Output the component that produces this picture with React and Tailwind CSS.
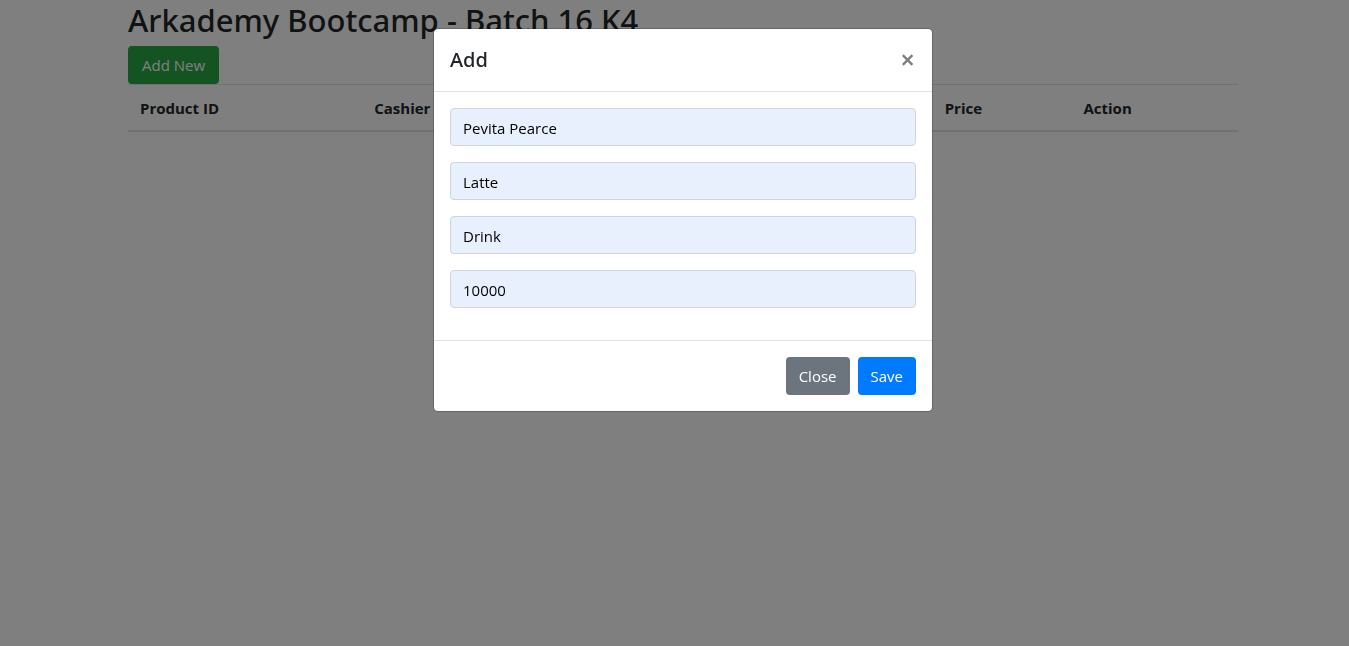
const columns = [
  { label: "Product ID", width: "w-[21.1%]" },
  { label: "Cashier", width: "w-[17.1%]" },
  { label: "Product", width: "w-[17.1%]" },
  { label: "Category", width: "w-[17.2%]" },
  { label: "Price", width: "w-[12.5%]" },
  { label: "Action", width: "w-[15%]" },
];

const fields = [
  { name: "cashier", label: "Cashier", value: "Pevita Pearce" },
  { name: "product", label: "Product", value: "Latte" },
  { name: "category", label: "Category", value: "Drink" },
  { name: "price", label: "Price", value: "10000" },
];

function Button({ className, ...props }) {
  return (
    <button
      type="button"
      className={`h-[38px] rounded text-[15px] leading-6 text-white ${className}`}
      {...props}
    />
  );
}

function ProductsPage() {
  return (
    <main className="pl-[17px]">
      <div className="mx-auto max-w-[1140px] px-[15px]">
        <h2 className="mb-1.5 font-['Noto_Sans','Open_Sans',sans-serif] text-[31px] font-medium leading-10">
          Arkademy Bootcamp - Batch 16 K4
        </h2>
        <Button className="block bg-[#28a745] px-3.5">Add New</Button>
        <table className="w-full table-fixed border-separate border-spacing-0 text-left text-[15px]">
          <thead>
            <tr>
              {columns.map((c) => (
                <th
                  key={c.label}
                  scope="col"
                  className={`h-12 border-b-2 border-t border-[#dee2e6] px-3 font-bold leading-6 ${c.width}`}
                >
                  {c.label}
                </th>
              ))}
            </tr>
          </thead>
          <tbody />
        </table>
      </div>
    </main>
  );
}

function AddDialog() {
  return (
    <div className="fixed inset-0 overflow-hidden bg-black/50 pl-[17px]">
      <form
        role="dialog"
        aria-modal="true"
        aria-labelledby="dialog-title"
        className="mx-auto mt-7 max-w-[500px] rounded-[5px] border border-black/20 bg-white bg-clip-padding"
      >
        <header className="flex items-center justify-between border-b border-[#dee2e6] p-4">
          <h5
            id="dialog-title"
            className="font-['Noto_Sans','Open_Sans',sans-serif] text-[20px] font-medium leading-[30px]"
          >
            Add
          </h5>
          <button type="button" aria-label="Close dialog" className="flex h-6 w-4 items-center justify-center text-[#7f7f7f]">
            <svg viewBox="0 0 12 12" className="size-3" fill="none" stroke="currentColor" strokeWidth="2.4">
              <path d="M.8 1.2 10.4 10.8M10.4 1.2 .8 10.8" />
            </svg>
          </button>
        </header>
        <div className="flex flex-col gap-4 px-4 pb-8 pt-4">
          {fields.map((f) => (
            <input
              key={f.name}
              name={f.name}
              type="text"
              aria-label={f.label}
              defaultValue={f.value}
              className="h-[38px] w-full rounded border border-[#ced4da] bg-[#e8f0fe] px-3 pt-0.5 text-[15px] text-black"
            />
          ))}
        </div>
        <footer className="flex justify-end gap-2 border-t border-[#dee2e6] p-4">
          <Button className="bg-[#6c757d] px-[13px]">Close</Button>
          <Button className="bg-[#007bff] px-[13px]">Save</Button>
        </footer>
      </form>
    </div>
  );
}

export default function App() {
  return (
    <div className="font-['Open_Sans','Noto_Sans',sans-serif] text-[#212529]">
      <ProductsPage />
      <AddDialog />
    </div>
  );
}
